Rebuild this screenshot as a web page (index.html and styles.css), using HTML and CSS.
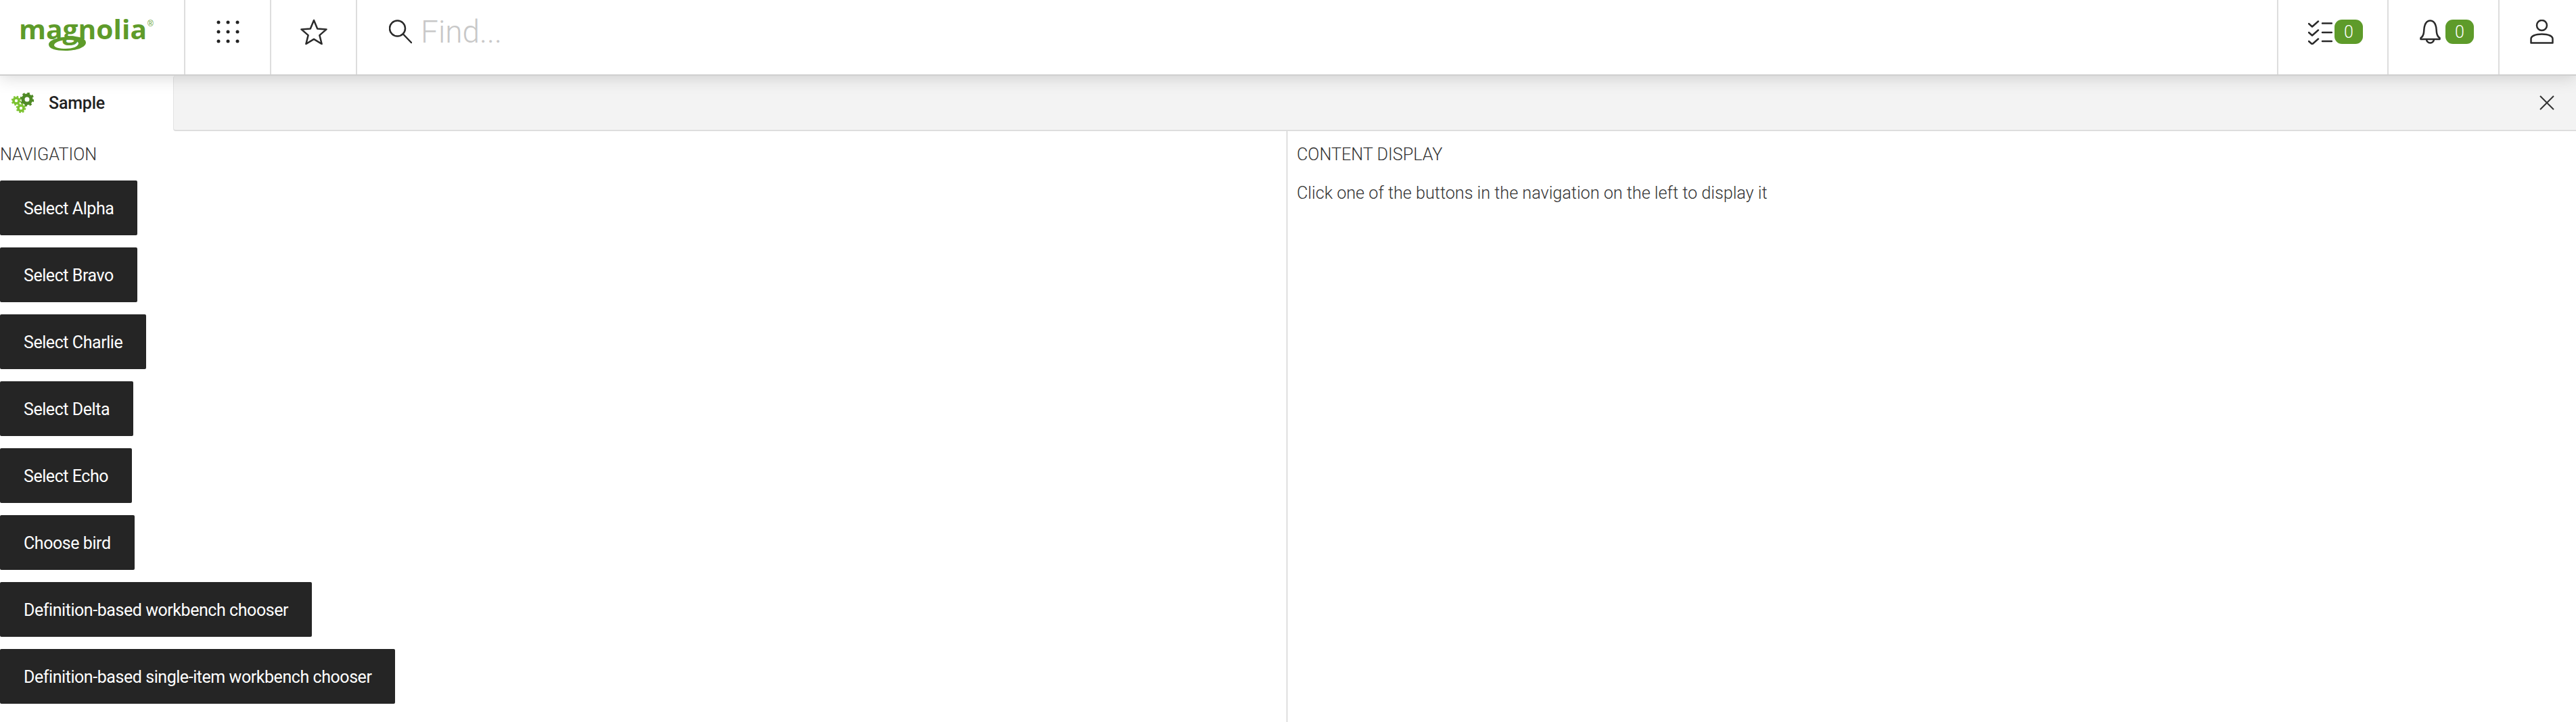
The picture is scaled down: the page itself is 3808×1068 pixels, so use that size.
FILE: index.html
```html
<!DOCTYPE html>
<html lang="en">
<head>
<meta charset="utf-8">
<title>Magnolia</title>
<link rel="stylesheet" href="styles.css">
</head>
<body>
<header class="topbar">
  <div class="cell logo-cell">
    <svg class="logo" width="204" height="52" viewBox="0 0 204 52">
      <text class="logo-text" x="0" y="29" textLength="189" lengthAdjust="spacingAndGlyphs">magnolia</text>
      <path class="swash" fill-rule="evenodd" d="M44 37c0-7 14-11 30-12 15-1 25 3 25 9 0 7-14 12-30 12-15 0-25-3-25-9zm8 1c0 3 8 5 17 5 10 0 19-3 19-8 0-3-7-5-16-5-11 0-20 4-20 8z"/>
      <text class="logo-reg" x="190" y="10">®</text>
    </svg>
  </div>
  <div class="cell icon-cell">
    <svg width="34" height="34" viewBox="0 0 34 34"><g class="dots"><circle cx="3" cy="3" r="2.500"/><circle cx="17" cy="3" r="2.500"/><circle cx="31" cy="3" r="2.500"/><circle cx="3" cy="17" r="2.500"/><circle cx="17" cy="17" r="2.500"/><circle cx="31" cy="17" r="2.500"/><circle cx="3" cy="31" r="2.500"/><circle cx="17" cy="31" r="2.500"/><circle cx="31" cy="31" r="2.500"/></g></svg>
  </div>
  <div class="cell icon-cell">
    <svg width="40" height="38" viewBox="0 0 40 38"><path class="line" d="M20 2l5.200 12.400 13.300 1-10.100 8.700 3.200 12.900L20 29.900 8.400 37l3.200-12.900L1.500 15.400l13.300-1z"/></svg>
  </div>
  <div class="search">
    <svg width="34" height="36" viewBox="0 0 34 36"><circle class="line" cx="12.500" cy="13" r="11.500"/><path class="line" d="M21 21.500L33 34"/></svg>
    <span class="find">Find...</span>
  </div>
  <div class="cell status-cell tasks-cell">
    <svg width="36" height="37" viewBox="0 0 36 37"><path class="line" d="M1 6l5 4.500 9-8M1 19l5 4.500 9-8M1 32l5 4.500 9-8M21 5.500h14M21 19h14M21 32h14"/></svg>
    <span class="badge">0</span>
  </div>
  <div class="cell status-cell notes-cell">
    <svg width="31" height="37" viewBox="0 0 30 37"><path class="line" d="M1 29v-2c2.500-1.500 4-4 4.500-8 .5-4 .2-7 1.500-10.500C8.500 4 11.500 1.500 15 1.500S21.500 4 23 8.500c1.300 3.500 1 6.500 1.500 10.500.5 4 2 6.500 4.500 8v2zM9.500 29a5.500 5.500 0 0 0 11 0"/></svg>
    <span class="badge">0</span>
  </div>
  <div class="cell user-cell">
    <svg width="36" height="36" viewBox="0 0 36 36"><circle class="line" cx="17.500" cy="8.500" r="7.500"/><path class="line" d="M1.500 34.500v-6c0-4 6-7 16-7s16 3 16 7v6z"/></svg>
  </div>
</header>
<nav class="tabbar">
  <div class="tab">
    <svg class="gears" width="33" height="31" viewBox="0 0 33 31">
      <circle class="teeth-dark" cx="23" cy="10" r="9"/><circle class="ring-dark" cx="23" cy="10" r="6"/>
      <circle class="teeth-light" cx="7" cy="12" r="6.300"/><circle class="ring-light" cx="7" cy="12" r="4"/>
      <circle class="teeth-light" cx="14" cy="23" r="6.300"/><circle class="ring-light" cx="14" cy="23" r="4"/>
    </svg>
    <span class="tab-label">Sample</span>
  </div>
  <div class="tab-rest">
    <svg width="22" height="22" viewBox="0 0 22 22"><path class="thin" d="M1 1l20 20M21 1L1 21"/></svg>
  </div>
</nav>
<main class="split">
  <section class="nav-pane">
    <div class="heading">NAVIGATION</div>
    <button class="btn">Select Alpha</button>
    <button class="btn">Select Bravo</button>
    <button class="btn">Select Charlie</button>
    <button class="btn">Select Delta</button>
    <button class="btn">Select Echo</button>
    <button class="btn">Choose bird</button>
    <button class="btn">Definition-based workbench chooser</button>
    <button class="btn">Definition-based single-item workbench chooser</button>
  </section>
  <section class="content-pane">
    <div class="heading">CONTENT DISPLAY</div>
    <p class="hint">Click one of the buttons in the navigation on the left to display it</p>
  </section>
</main>
</body>
</html>
```
FILE: styles.css
```css
html, body { margin: 0; padding: 0; height: 100%; background: #fff; overflow: hidden; }
body { font-family: Roboto, "Liberation Sans", sans-serif; color: #222; display: flex; flex-direction: column; }

.topbar { display: flex; height: 112px; flex: none; box-sizing: border-box; border-bottom: 2px solid #cfcfcf; position: relative; z-index: 2; box-shadow: 0 2px 24px rgba(0,0,0,.17); background: #fff; }
.cell { display: flex; align-items: center; justify-content: center; box-sizing: border-box; border-right: 2px solid #ddd; padding-bottom: 16px; }
.logo-cell { width: 274px; justify-content: flex-start; padding-left: 28px; padding-bottom: 0; align-items: flex-start; padding-top: 29px; }
.logo { overflow: visible; }
.logo-text { font-family: "Open Sans", sans-serif; font-weight: 700; font-size: 40px; fill: #5e9b2a; }
.logo-reg { font-family: "Liberation Sans", sans-serif; font-size: 12px; fill: #5e9b2a; }
.swash { fill: #5e9b2a; }
.icon-cell { width: 127px; }
.dots { fill: #222; }
.line { fill: none; stroke: #2a2a2a; stroke-width: 2.500; stroke-linejoin: round; stroke-linecap: round; }
.thin { fill: none; stroke: #333; stroke-width: 2; }

.search { flex: 1; display: flex; align-items: center; gap: 13px; padding: 0 0 16px 47px; box-sizing: border-box; }
.find { font-weight: 300; font-size: 46px; color: #c8c8c8; }
.status-cell { width: 163px; justify-content: flex-start; }
.tasks-cell { border-left: 2px solid #ddd; width: 165px; padding-left: 44px; gap: 3px; }
.notes-cell { width: 164px; padding-left: 46px; gap: 7px; }
.user-cell { width: 113px; border-right: 0; justify-content: flex-start; padding-left: 45px; }
.badge { width: 42px; height: 36px; border-radius: 11px; background: #5e9b2a; color: #fff; font-weight: 300; font-size: 25px; display: flex; align-items: center; justify-content: center; }

.tabbar { display: flex; height: 82px; flex: none; }
.tab { width: 254px; display: flex; align-items: center; gap: 22px; padding: 0 0 2px 17px; box-sizing: border-box; }
.teeth-dark { fill: none; stroke: #4f8a26; stroke-width: 3; stroke-dasharray: 3.500 3.570; }
.ring-dark { fill: none; stroke: #4f8a26; stroke-width: 5; }
.teeth-light { fill: none; stroke: #7cc230; stroke-width: 2; stroke-dasharray: 2.500 2.450; }
.ring-light { fill: none; stroke: #7cc230; stroke-width: 3.600; }
.tab-label { font-weight: 500; font-size: 25px; letter-spacing: -.2px; color: #222; }
.tab-rest { flex: 1; margin-left: 2px; background: #f3f3f3; border-left: 1px solid #e2e2e2; border-bottom: 2px solid #ddd; border-radius: 4px 0 0 4px; display: flex; align-items: center; justify-content: flex-end; padding-right: 32px; }

.split { flex: 1; display: flex; min-height: 0; }
.nav-pane { width: 1902px; flex: none; display: flex; flex-direction: column; align-items: flex-start; gap: 18px; border-right: 1px solid #c4c4c4; padding-top: 21px; box-sizing: content-box; }
.content-pane { flex: 1; padding: 21px 0 0 14px; }
.heading { font-weight: 300; font-size: 25.200px; line-height: 28px; color: #333; height: 34px; }
.hint { margin: 0; padding-top: 23px; font-weight: 300; font-size: 25.200px; line-height: 28px; color: #333; }
.btn { height: 81px; padding: 2px 35px 0; border: 0; border-radius: 2px; background: #252525; color: #fff; font-family: inherit; font-size: 25px; letter-spacing: -.44px; font-weight: 400; white-space: nowrap; flex: none; }
```
